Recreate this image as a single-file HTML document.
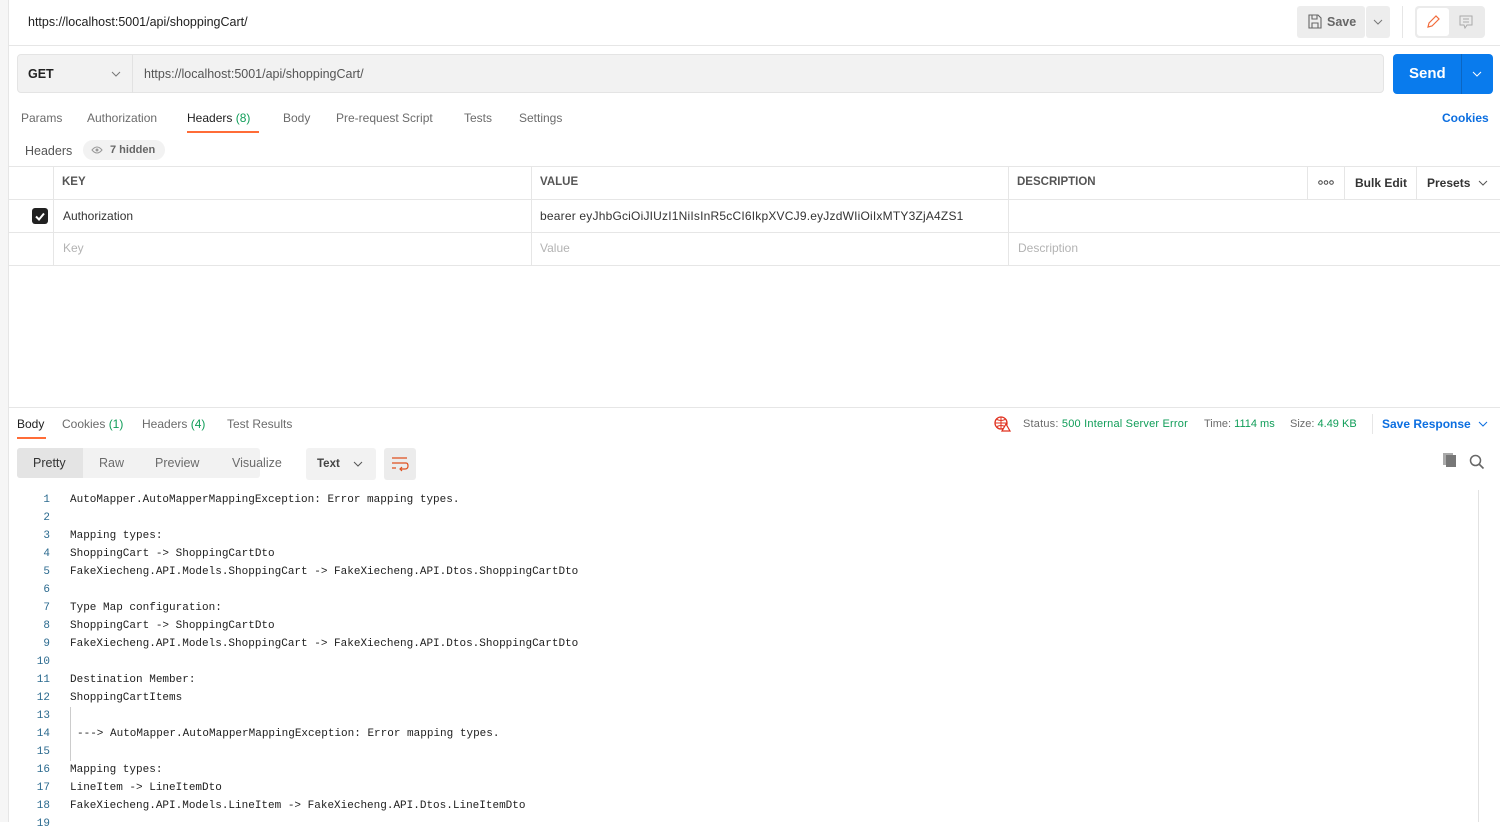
<!DOCTYPE html><html><head><style>
body{margin:0;width:1500px;height:822px;overflow:hidden;background:#fff;font-family:"Liberation Sans",sans-serif;font-size:12px;color:#212121;position:relative}
.a{position:absolute}
.leftbar{left:0;top:0;width:8px;height:822px;background:#f6f6f6;border-right:1px solid #e6e6e6}
.tab{position:absolute;top:111px;color:#6b6b6b;font-size:12px}
.g{color:#0f9d58}
.hd{position:absolute;top:176px;font-size:11.5px;color:#555;font-weight:bold}
.ln{position:absolute;left:20px;width:30px;text-align:right;font-family:"Liberation Mono",monospace;font-size:11px;color:#2b6a8f}
.cd{position:absolute;left:70px;font-family:"Liberation Mono",monospace;font-size:11px;color:#212121;white-space:pre}
.chev{position:absolute}
</style></head><body>
<div class="a leftbar"></div>
<div class="a" style="left:28px;top:15px;font-size:12.5px;color:#212121">https://localhost:5001/api/shoppingCart/</div>
<div class="a" style="left:1297px;top:6px;width:68px;height:32px;background:#ededed;border-radius:3px"></div>
<svg class="a" style="left:1308px;top:14px" width="14" height="15" viewBox="0 0 14 15"><path d="M1 1h9l3 3v10H1z M4 1v4h5V1 M4 14V9h6v5" fill="none" stroke="#666" stroke-width="1.1"/></svg>
<div class="a" style="left:1327px;top:15px;color:#666;font-weight:bold;font-size:12.5px">Save</div>
<div class="a" style="left:1366px;top:6px;width:24px;height:32px;background:#ededed;border-radius:3px"></div>
<svg class="chev" style="left:1373px;top:19px" width="10" height="6"><path d="M1 1l4 4 4-4" fill="none" stroke="#777" stroke-width="1"/></svg>
<div class="a" style="left:1402px;top:6px;width:1px;height:32px;background:#e6e6e6"></div>
<div class="a" style="left:1415px;top:6px;width:70px;height:32px;background:#ebebeb;border-radius:4px"></div>
<div class="a" style="left:1417px;top:8px;width:32px;height:28px;background:#fff;border-radius:3px"></div>
<svg class="a" style="left:1426px;top:14px" width="14" height="15"><path d="M2 13l1-4 7-7 3 3-7 7z" fill="none" stroke="#f26b3a" stroke-width="1.2"/></svg>
<svg class="a" style="left:1459px;top:15px" width="14" height="14"><path d="M1 1h12v9H8l-2 3-1-3H1z M4 4h6 M4 7h6" fill="none" stroke="#aaa" stroke-width="1"/></svg>
<div class="a" style="left:9px;top:45px;width:1491px;height:1px;background:#e6e6e6"></div>
<div class="a" style="left:17px;top:54px;width:1367px;height:39px;background:#f2f2f2;border:1px solid #e4e4e4;border-radius:4px;box-sizing:border-box"></div>
<div class="a" style="left:132px;top:55px;width:1px;height:38px;background:#e2e2e2"></div>
<div class="a" style="left:28px;top:67px;font-weight:bold;font-size:12.5px;color:#212121">GET</div>
<svg class="chev" style="left:111px;top:71px" width="10" height="6"><path d="M1 1l4 4 4-4" fill="none" stroke="#777" stroke-width="1"/></svg>
<div class="a" style="left:144px;top:67px;color:#555;font-size:12.5px">https://localhost:5001/api/shoppingCart/</div>
<div class="a" style="left:1393px;top:54px;width:100px;height:40px;background:#097bed;border-radius:4px"></div>
<div class="a" style="left:1461px;top:54px;width:1px;height:40px;background:#0b66c3"></div>
<div class="a" style="left:1409px;top:65px;color:#fff;font-weight:bold;font-size:15px">Send</div>
<svg class="chev" style="left:1472px;top:71px" width="10" height="6"><path d="M1 1l4 4 4-4" fill="none" stroke="#fff" stroke-width="1"/></svg>
<div class="tab" style="left:21px">Params</div>
<div class="tab" style="left:87px">Authorization</div>
<div class="tab" style="left:187px;color:#212121">Headers <span class="g">(8)</span></div>
<div class="a" style="left:187px;top:131px;width:72px;height:2px;background:#ff6c37"></div>
<div class="tab" style="left:283px">Body</div>
<div class="tab" style="left:336px">Pre-request Script</div>
<div class="tab" style="left:464px">Tests</div>
<div class="tab" style="left:519px">Settings</div>
<div class="a" style="left:1442px;top:111px;color:#0b6ee0;font-weight:bold">Cookies</div>
<div class="a" style="left:25px;top:144px;color:#555;font-size:12.5px">Headers</div>
<div class="a" style="left:83px;top:140px;width:82px;height:20px;background:#f2f2f2;border-radius:10px"></div>
<svg class="a" style="left:91px;top:146px" width="12" height="8"><path d="M1 4q5-6 10 0q-5 6-10 0z" fill="none" stroke="#999" stroke-width="1"/><circle cx="6" cy="4" r="1.5" fill="#999"/></svg>
<div class="a" style="left:110px;top:144px;color:#666;font-size:11px;font-weight:bold">7 hidden</div>
<div class="a" style="left:9px;top:166px;width:1491px;height:1px;background:#e6e6e6"></div>
<div class="a" style="left:9px;top:199px;width:1491px;height:1px;background:#e6e6e6"></div>
<div class="a" style="left:9px;top:232px;width:1491px;height:1px;background:#e6e6e6"></div>
<div class="a" style="left:9px;top:265px;width:1491px;height:1px;background:#e6e6e6"></div>
<div class="a" style="left:53px;top:166px;width:1px;height:99px;background:#e6e6e6"></div>
<div class="a" style="left:531px;top:166px;width:1px;height:99px;background:#e6e6e6"></div>
<div class="a" style="left:1008px;top:166px;width:1px;height:99px;background:#e6e6e6"></div>
<div class="a" style="left:1307px;top:166px;width:1px;height:33px;background:#e6e6e6"></div>
<div class="a" style="left:1344px;top:166px;width:1px;height:33px;background:#e6e6e6"></div>
<div class="a" style="left:1416px;top:166px;width:1px;height:33px;background:#e6e6e6"></div>
<div class="hd" style="left:62px">KEY</div>
<div class="hd" style="left:540px">VALUE</div>
<div class="hd" style="left:1017px">DESCRIPTION</div>
<svg class="a" style="left:1318px;top:180px" width="16" height="5"><circle cx="2.5" cy="2.5" r="1.8" fill="none" stroke="#444"/><circle cx="8" cy="2.5" r="1.8" fill="none" stroke="#444"/><circle cx="13.5" cy="2.5" r="1.8" fill="none" stroke="#444"/></svg>
<div class="a" style="left:1355px;top:176px;font-weight:bold;color:#333">Bulk Edit</div>
<div class="a" style="left:1427px;top:176px;font-weight:bold;color:#333">Presets</div>
<svg class="chev" style="left:1478px;top:180px" width="10" height="6"><path d="M1 1l4 4 4-4" fill="none" stroke="#555" stroke-width="1"/></svg>
<div class="a" style="left:32px;top:208px;width:16px;height:16px;background:#212121;border-radius:3px"></div>
<svg class="a" style="left:32px;top:208px" width="16" height="16"><path d="M4 8.5l3 3 5-6" fill="none" stroke="#fff" stroke-width="2"/></svg>
<div class="a" style="left:63px;top:209px;color:#333">Authorization</div>
<div class="a" style="left:540px;top:209px;color:#333;letter-spacing:0.2px">bearer eyJhbGciOiJIUzI1NiIsInR5cCI6IkpXVCJ9.eyJzdWIiOiIxMTY3ZjA4ZS1</div>
<div class="a" style="left:63px;top:241px;color:#b3b3b3">Key</div>
<div class="a" style="left:540px;top:241px;color:#b3b3b3">Value</div>
<div class="a" style="left:1018px;top:241px;color:#b3b3b3">Description</div>
<div class="a" style="left:9px;top:407px;width:1491px;height:1px;background:#e6e6e6"></div>
<div class="a" style="left:17px;top:417px;color:#212121">Body</div>
<div class="a" style="left:17px;top:437px;width:29px;height:2px;background:#ff6c37"></div>
<div class="a" style="left:62px;top:417px;color:#6b6b6b">Cookies <span class="g">(1)</span></div>
<div class="a" style="left:142px;top:417px;color:#6b6b6b">Headers <span class="g">(4)</span></div>
<div class="a" style="left:227px;top:417px;color:#6b6b6b">Test Results</div>
<svg class="a" style="left:994px;top:416px" width="18" height="16"><circle cx="7" cy="7" r="6" fill="none" stroke="#e0301e" stroke-width="1.3"/><path d="M1 7h12 M7 1v12 M3 3.5q4 2 8 0 M3 10.5q4-2 8 0" fill="none" stroke="#e0301e" stroke-width="1"/><path d="M12 8l4 7h-8z" fill="#fff" stroke="#e0301e" stroke-width="1.2"/></svg>
<div class="a" style="left:1023px;top:418px;font-size:11px;color:#6b6b6b;letter-spacing:0.2px">Status: <span class="g">500 Internal Server Error</span></div>
<div class="a" style="left:1204px;top:418px;font-size:11px;color:#6b6b6b">Time: <span class="g">1114 ms</span></div>
<div class="a" style="left:1290px;top:418px;font-size:11px;color:#6b6b6b">Size: <span class="g">4.49 KB</span></div>
<div class="a" style="left:1372px;top:414px;width:1px;height:20px;background:#e6e6e6"></div>
<div class="a" style="left:1382px;top:417px;color:#0b6ee0;font-weight:bold">Save Response</div>
<svg class="chev" style="left:1478px;top:421px" width="10" height="6"><path d="M1 1l4 4 4-4" fill="none" stroke="#0b6ee0" stroke-width="1"/></svg>
<div class="a" style="left:17px;top:448px;width:243px;height:30px;background:#f2f2f2;border-radius:3px"></div>
<div class="a" style="left:17px;top:448px;width:66px;height:30px;background:#e4e4e4;border-radius:3px 0 0 3px"></div>
<div class="a" style="left:33px;top:456px;color:#333;font-size:12.5px">Pretty</div>
<div class="a" style="left:99px;top:456px;color:#6b6b6b;font-size:12.5px">Raw</div>
<div class="a" style="left:155px;top:456px;color:#6b6b6b;font-size:12.5px">Preview</div>
<div class="a" style="left:232px;top:456px;color:#6b6b6b;font-size:12.5px">Visualize</div>
<div class="a" style="left:306px;top:448px;width:70px;height:32px;background:#f2f2f2;border-radius:3px"></div>
<div class="a" style="left:317px;top:458px;color:#444;font-weight:bold;font-size:11.5px">Text</div>
<svg class="chev" style="left:353px;top:461px" width="10" height="6"><path d="M1 1l4 4 4-4" fill="none" stroke="#555" stroke-width="1"/></svg>
<div class="a" style="left:384px;top:448px;width:32px;height:32px;background:#ececec;border-radius:3px"></div>
<svg class="a" style="left:391px;top:456px" width="18" height="16"><path d="M1 2h15 M1 7h14q2 0 2 3t-3 3h-4 M11 11l-2 2 2 2 M1 12h4" fill="none" stroke="#e0501e" stroke-width="1.2"/></svg>
<div class="a" style="left:1446px;top:455px;width:10px;height:12px;background:#777;box-shadow:-3px -2px 0 #aaa"></div>
<svg class="a" style="left:1469px;top:454px" width="16" height="16"><circle cx="6.5" cy="6.5" r="5" fill="none" stroke="#666" stroke-width="1.5"/><path d="M10 10l4.5 4.5" stroke="#666" stroke-width="1.6"/></svg>
<div class="a" style="left:1478px;top:490px;width:1px;height:332px;background:#e2e2e2"></div>
<div class="a" style="left:70px;top:707px;width:1px;height:54px;background:#ccc"></div>
<div class="ln" style="top:494px">1</div><div class="cd" style="top:494px">AutoMapper.AutoMapperMappingException: Error mapping types.</div>
<div class="ln" style="top:512px">2</div>
<div class="ln" style="top:530px">3</div><div class="cd" style="top:530px">Mapping types:</div>
<div class="ln" style="top:548px">4</div><div class="cd" style="top:548px">ShoppingCart -&gt; ShoppingCartDto</div>
<div class="ln" style="top:566px">5</div><div class="cd" style="top:566px">FakeXiecheng.API.Models.ShoppingCart -&gt; FakeXiecheng.API.Dtos.ShoppingCartDto</div>
<div class="ln" style="top:584px">6</div>
<div class="ln" style="top:602px">7</div><div class="cd" style="top:602px">Type Map configuration:</div>
<div class="ln" style="top:620px">8</div><div class="cd" style="top:620px">ShoppingCart -&gt; ShoppingCartDto</div>
<div class="ln" style="top:638px">9</div><div class="cd" style="top:638px">FakeXiecheng.API.Models.ShoppingCart -&gt; FakeXiecheng.API.Dtos.ShoppingCartDto</div>
<div class="ln" style="top:656px">10</div>
<div class="ln" style="top:674px">11</div><div class="cd" style="top:674px">Destination Member:</div>
<div class="ln" style="top:692px">12</div><div class="cd" style="top:692px">ShoppingCartItems</div>
<div class="ln" style="top:710px">13</div>
<div class="ln" style="top:728px">14</div><div class="cd" style="top:728px;left:77px">---&gt; AutoMapper.AutoMapperMappingException: Error mapping types.</div>
<div class="ln" style="top:746px">15</div>
<div class="ln" style="top:764px">16</div><div class="cd" style="top:764px">Mapping types:</div>
<div class="ln" style="top:782px">17</div><div class="cd" style="top:782px">LineItem -&gt; LineItemDto</div>
<div class="ln" style="top:800px">18</div><div class="cd" style="top:800px">FakeXiecheng.API.Models.LineItem -&gt; FakeXiecheng.API.Dtos.LineItemDto</div>
<div class="ln" style="top:818px">19</div>
</body></html>
